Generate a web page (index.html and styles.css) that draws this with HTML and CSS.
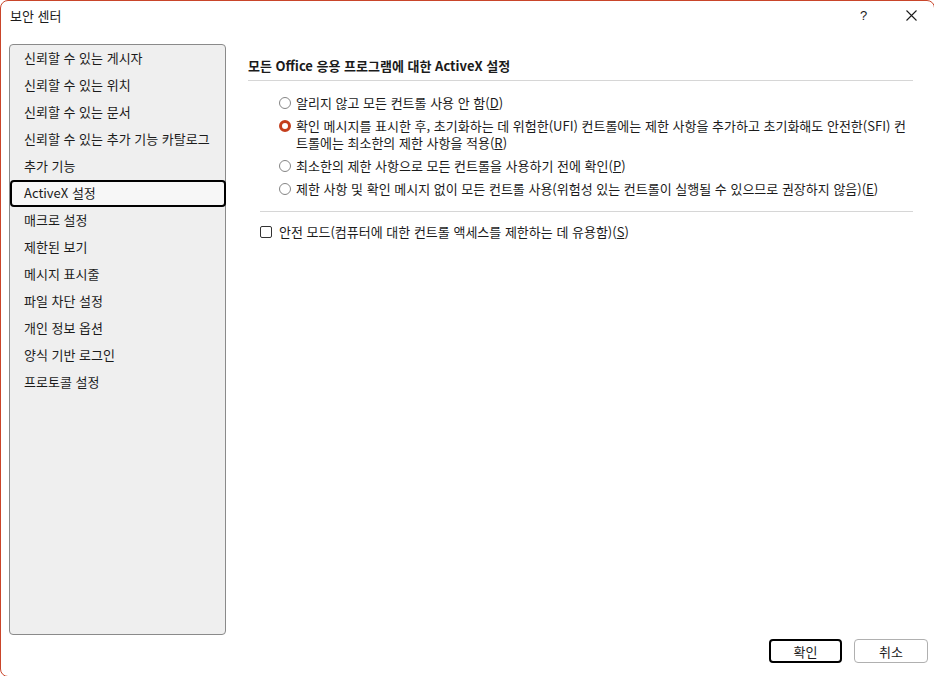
FILE: index.html
```html
<!DOCTYPE html>
<html lang="ko">
  <head>
    <meta charset="UTF-8" />
    <meta name="viewport" content="width=device-width, initial-scale=1.0" />
    <title>보안 센터</title>
    <link rel="stylesheet" href="styles.css">
  </head>
  <body>
    <div class="window">
      <div class="titlebar">
        <span class="title">보안 센터</span>
        <span class="help">?</span>
        <span class="close">
          <svg width="11" height="11" viewBox="0 0 11 11">
            <path d="M0.5 0.5 L10.5 10.5 M10.5 0.5 L0.5 10.5" stroke="#1b1b1b" stroke-width="1.1" fill="none" />
          </svg>
        </span>
      </div>

      <div class="content">
        <ul class="nav">
          <li>신뢰할 수 있는 게시자</li>
          <li>신뢰할 수 있는 위치</li>
          <li>신뢰할 수 있는 문서</li>
          <li>신뢰할 수 있는 추가 기능 카탈로그</li>
          <li>추가 기능</li>
          <li class="selected">ActiveX 설정</li>
          <li>매크로 설정</li>
          <li>제한된 보기</li>
          <li>메시지 표시줄</li>
          <li>파일 차단 설정</li>
          <li>개인 정보 옵션</li>
          <li>양식 기반 로그인</li>
          <li>프로토콜 설정</li>
        </ul>

        <section class="main">
          <h2 class="heading">모든 Office 응용 프로그램에 대한 ActiveX 설정</h2>

          <div class="options">
            <label class="option">
              <span class="radio"></span>
              <span class="label">알리지 않고 모든 컨트롤 사용 안 함(<u>D</u>)</span>
            </label>
            <label class="option">
              <span class="radio checked"></span>
              <span class="label">확인 메시지를 표시한 후, 초기화하는 데 위험한(UFI) 컨트롤에는 제한 사항을 추가하고 초기화해도 안전한(SFI) 컨트롤에는 최소한의 제한 사항을 적용(<u>R</u>)</span>
            </label>
            <label class="option">
              <span class="radio"></span>
              <span class="label">최소한의 제한 사항으로 모든 컨트롤을 사용하기 전에 확인(<u>P</u>)</span>
            </label>
            <label class="option">
              <span class="radio"></span>
              <span class="label">제한 사항 및 확인 메시지 없이 모든 컨트롤 사용(위험성 있는 컨트롤이 실행될 수 있으므로 권장하지 않음)(<u>E</u>)</span>
            </label>
          </div>

          <div class="divider"></div>

          <label class="check-row">
            <span class="checkbox"></span>
            <span class="label">안전 모드(컴퓨터에 대한 컨트롤 액세스를 제한하는 데 유용함)(<u>S</u>)</span>
          </label>
        </section>
      </div>

      <div class="footer">
        <button class="btn primary">확인</button>
        <button class="btn">취소</button>
      </div>
    </div>
  </body>
</html>
```

FILE: styles.css
```css
html,
body {
  margin: 0;
  padding: 0;
  overflow: hidden;
  background: #ffffff;
}

body {
  font-family: "Noto Sans CJK KR", "Noto Sans", sans-serif;
  font-size: 13px;
  color: #1b1b1b;
}

.window {
  box-sizing: border-box;
  width: 935px;
  height: 677px;
  border: 1px solid #c9452a;
  border-radius: 8px 8px 0 8px;
  display: flex;
  flex-direction: column;
  background: #ffffff;
}

/* title bar */
.titlebar {
  height: 28px;
  display: flex;
  align-items: center;
  padding-left: 9px;
  padding-bottom: 1px;
}

.title {
  flex: 1;
}

.help {
  width: 14px;
  margin-right: 32px;
  font-size: 13px;
  font-family: "Liberation Sans", sans-serif;
}

.close {
  display: flex;
  margin-right: 17px;
}

/* body */
.content {
  flex: 1;
  display: flex;
  padding: 14px 0 0 8px;
  min-height: 0;
}

.nav {
  list-style: none;
  margin: 0;
  padding: 0;
  width: 215px;
  background: #efefef;
  border: 1px solid #8a8a8a;
  border-radius: 4px;
}

.nav li {
  height: 27px;
  line-height: 25px;
  padding-left: 14px;
  padding-bottom: 2px;
  box-sizing: border-box;
  white-space: nowrap;
}

.nav li.selected {
  border: 2px solid #000000;
  border-radius: 4px;
  line-height: 21px;
  padding-left: 12px;
  margin-right: -1px;
  background: #f7f7f7;
}

.main {
  flex: 1;
  padding: 13px 21px 0 22px;
}

.heading {
  margin: 0;
  font-size: 13px;
  font-weight: bold;
  line-height: 17px;
  padding-bottom: 6px;
  border-bottom: 1px solid #d6d6d6;
}

.options {
  padding: 13px 0 0 31px;
  display: flex;
  flex-direction: column;
  gap: 6px;
}

.option {
  display: flex;
  align-items: flex-start;
  line-height: 17px;
}

.radio {
  box-sizing: border-box;
  flex: none;
  width: 12px;
  height: 12px;
  margin-top: 3px;
  margin-right: 5px;
  border: 1px solid #858585;
  border-radius: 50%;
  background: #ffffff;
}

.radio.checked {
  border: 3.5px solid #c43e1c;
}

.divider {
  margin: 14px 0 0 12px;
  border-top: 1px solid #d6d6d6;
}

.check-row {
  display: flex;
  align-items: flex-start;
  line-height: 17px;
  margin: 11px 0 0 12px;
}

.checkbox {
  box-sizing: border-box;
  flex: none;
  width: 12px;
  height: 12px;
  margin-top: 3px;
  margin-right: 7px;
  border: 1px solid #333333;
  border-radius: 2px;
  background: #ffffff;
}

/* footer buttons */
.footer {
  height: 41px;
  box-sizing: border-box;
  display: flex;
  justify-content: flex-end;
  gap: 12px;
  padding: 4px 6px 0 0;
}

.btn {
  box-sizing: border-box;
  width: 74px;
  height: 24px;
  font-family: inherit;
  font-size: 13px;
  color: #1b1b1b;
  background: #ffffff;
  border: 1px solid #b0b0b0;
  border-radius: 4px;
  padding: 0;
}

.btn.primary {
  width: 73px;
  border: 2px solid #000000;
}
```
